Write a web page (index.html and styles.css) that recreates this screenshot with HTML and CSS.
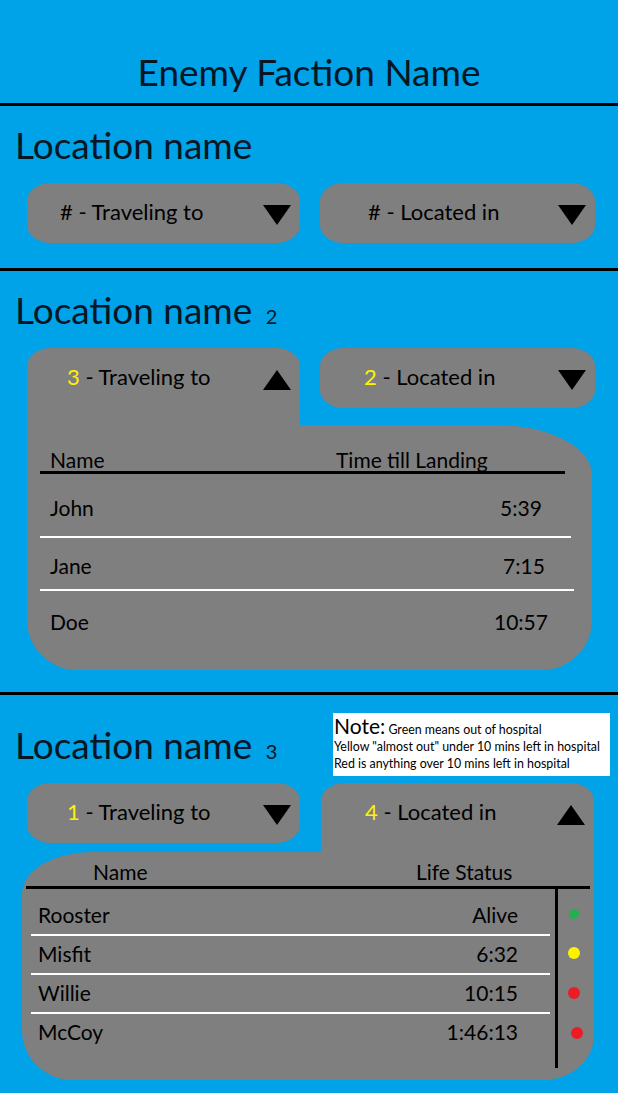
FILE: index.html
```html
<!DOCTYPE html>
<html lang="en">
<head>
<meta charset="utf-8">
<title>Enemy Faction</title>
<link rel="stylesheet" href="styles.css">
</head>
<body>
<header class="top">
  <h1 class="faction">Enemy Faction Name</h1>
</header>

<section class="loc loc-1">
  <div class="loc-head">
    <h2 class="loc-name">Location name</h2>
  </div>
  <div class="tabs">
    <div class="dd dd-left">
      <div class="dd-row pad-hash-l">
        <span class="dd-label"># - Traveling to</span>
        <svg class="tri" viewBox="0 0 28 20" width="28" height="20"><polygon points="0,0 28,0 14,20"/></svg>
      </div>
    </div>
    <div class="dd dd-right">
      <div class="dd-row pad-hash-r">
        <span class="dd-label"># - Located in</span>
        <svg class="tri" viewBox="0 0 28 20" width="28" height="20"><polygon points="0,0 28,0 14,20"/></svg>
      </div>
    </div>
  </div>
</section>

<section class="loc loc-2">
  <div class="loc-head">
    <h2 class="loc-name">Location name <span class="loc-idx">2</span></h2>
  </div>
  <div class="tabs">
    <div class="dd dd-left dd-open">
      <div class="dd-row pad-l">
        <span class="dd-label"><span class="num">3</span> - Traveling to</span>
        <svg class="tri" viewBox="0 0 28 20" width="28" height="20"><polygon points="0,20 28,20 14,0"/></svg>
      </div>
    </div>
    <div class="dd dd-right">
      <div class="dd-row pad-r">
        <span class="dd-label"><span class="num">2</span> - Located in</span>
        <svg class="tri" viewBox="0 0 28 20" width="28" height="20"><polygon points="0,0 28,0 14,20"/></svg>
      </div>
    </div>
  </div>
  <div class="panel panel-travel">
    <div class="t-head">
      <span>Name</span>
      <span>Time till Landing</span>
    </div>
    <div class="t-row t-first"><span>John</span><span class="t-val">5:39</span></div>
    <div class="t-row t-mid"><span>Jane</span><span class="t-val">7:15</span></div>
    <div class="t-row t-last"><span>Doe</span><span class="t-val">10:57</span></div>
  </div>
</section>

<section class="loc loc-3">
  <div class="loc-head loc-head-note">
    <h2 class="loc-name">Location name <span class="loc-idx">3</span></h2>
    <div class="note">
      <div><span class="note-title">Note:</span> Green means out of hospital</div>
      <div>Yellow "almost out" under 10 mins left in hospital</div>
      <div>Red is anything over 10 mins left in hospital</div>
    </div>
  </div>
  <div class="tabs">
    <div class="dd dd-left">
      <div class="dd-row pad-l">
        <span class="dd-label"><span class="num">1</span> - Traveling to</span>
        <svg class="tri" viewBox="0 0 28 20" width="28" height="20"><polygon points="0,0 28,0 14,20"/></svg>
      </div>
    </div>
    <div class="dd dd-right dd-open dd-open-r">
      <div class="dd-row pad-r">
        <span class="dd-label"><span class="num">4</span> - Located in</span>
        <svg class="tri" viewBox="0 0 28 20" width="28" height="20"><polygon points="0,20 28,20 14,0"/></svg>
      </div>
    </div>
  </div>
  <div class="panel panel-located">
    <div class="s-head">
      <span>Name</span>
      <span>Life Status</span>
    </div>
    <div class="s-body">
      <div class="s-list">
        <div class="s-row"><span>Rooster</span><span>Alive</span></div>
        <div class="s-row"><span>Misfit</span><span>6:32</span></div>
        <div class="s-row"><span>Willie</span><span>10:15</span></div>
        <div class="s-row s-last"><span>McCoy</span><span>1:46:13</span></div>
      </div>
      <div class="s-dots">
        <span class="dot dot-green"></span>
        <span class="dot dot-yellow"></span>
        <span class="dot dot-red"></span>
        <span class="dot dot-red dot-off"></span>
      </div>
    </div>
  </div>
</section>
</body>
</html>
```

FILE: styles.css
```css
* { box-sizing: border-box; }

html, body {
  margin: 0;
  padding: 0;
}

body {
  width: 618px;
  height: 1093px;
  overflow: hidden;
  background: #00a2e8;
  font-family: Lato, "Open Sans", sans-serif;
  color: #000;
}

.top {
  padding: 50px 0 9px;
  border-bottom: 3px solid #000;
}

.faction {
  margin: 0;
  font-size: 37px;
  line-height: 44px;
  font-weight: 400;
  text-align: center;
  color: #061624;
}

.loc {
  padding: 17px 23px 25px 27px;
  border-bottom: 3px solid #000;
}

.loc-2 { padding-bottom: 22px; }

.loc-3 {
  padding-top: 18px;
  padding-bottom: 0;
  border-bottom: none;
}

.loc-head {
  display: flex;
  align-items: flex-start;
  height: 44px;
  margin: 0 0 16px -12px;
}

.loc-head-note {
  height: 63px;
  margin-bottom: 7px;
}

.loc-head-note .loc-name {
  margin-top: 10px;
}

.loc-name {
  margin: 0;
  font-size: 37px;
  line-height: 44px;
  height: 44px;
  font-weight: 400;
  color: #061624;
}

.loc-idx {
  font-size: 20px;
  line-height: 0;
  margin-left: 4px;
}

.note {
  margin-left: auto;
  margin-right: -15px;
  width: 277px;
  height: 63px;
  background: #fff;
  padding: 2px 0 0 1px;
  font-size: 12.4px;
  line-height: 17px;
  color: #000;
  white-space: nowrap;
}

.note-title {
  font-size: 21px;
  line-height: 22px;
}

.tabs {
  display: flex;
  align-items: flex-start;
  gap: 20px;
}

.dd {
  background: #7f7f7f;
  height: 60px;
  border-radius: 24px / 18px;
}

.dd-left { width: 273px; }
.dd-right { width: 275px; }

.dd-open {
  height: 77px;
  border-radius: 24px 24px 0 0 / 18px 18px 0 0;
}

.dd-open-r {
  height: 69px;
  width: 273px;
  margin-left: 1px;
}

.dd-row {
  height: 60px;
  display: flex;
  align-items: center;
  justify-content: space-between;
  padding-right: 9px;
  font-size: 22px;
  line-height: 26px;
}

.pad-hash-l { padding-left: 33px; }
.pad-hash-r { padding-left: 48px; }
.pad-l { padding-left: 40px; }
.pad-r { padding-left: 44px; }

.dd-label {
  color: #000;
  margin-top: -3px;
}

.num { color: #fff200; }

.tri {
  display: block;
  fill: #000;
  margin-top: 3px;
}

.panel {
  background: #7f7f7f;
}

/* Section 2 table */
.panel-travel {
  width: 565px;
  height: 245px;
  padding: 24px 21px 0 13px;
  border-radius: 0 95px 50px 50px / 0 50px 50px 50px;
}

.t-head {
  display: grid;
  grid-template-columns: 286px auto;
  padding-left: 10px;
  margin-right: 6px;
  font-size: 21px;
  line-height: 22px;
  border-bottom: 3px solid #000;
}

.t-row {
  display: grid;
  grid-template-columns: 1fr 64px;
  padding: 20px 18px 14px 10px;
  font-size: 21px;
  line-height: 22px;
  border-bottom: 2px solid #fff;
}

.t-first { padding-top: 23px; padding-bottom: 17px; }
.t-mid { padding-top: 17px; padding-bottom: 12px; margin-right: -3px; }
.t-last { border-bottom: none; }

.t-val { text-align: center; }

/* Section 3 table */
.panel-located {
  width: 572px;
  height: 228px;
  margin-left: -5px;
  padding: 9px 4px 0 4px;
  border-radius: 70px 0 50px 50px / 42px 0 45px 50px;
}

.s-head {
  display: grid;
  grid-template-columns: 323px auto;
  padding: 0 0 3px 67px;
  font-size: 21px;
  line-height: 22px;
  border-bottom: 3px solid #000;
}

.s-body {
  display: flex;
}

.s-list {
  width: 532px;
  padding: 8px 5px 17px 5px;
  border-right: 3px solid #000;
}

.s-row {
  display: flex;
  justify-content: space-between;
  padding: 7px 32px 8px 7px;
  font-size: 21px;
  line-height: 22px;
  border-bottom: 2px solid #fff;
}

.s-last { border-bottom: none; }

.s-dots {
  flex: 1;
  display: flex;
  flex-direction: column;
  align-items: center;
  padding-top: 20px;
  gap: 28px;
}

.dot {
  display: block;
  width: 11px;
  height: 11px;
  border-radius: 50%;
}

.dot-green { background: #22b14c; width: 10px; height: 10px; }
.dot-yellow { background: #fff200; width: 12px; height: 12px; }
.dot-red { background: #ed1c24; width: 12px; height: 12px; }
.dot-off { margin-left: 6px; }
```
